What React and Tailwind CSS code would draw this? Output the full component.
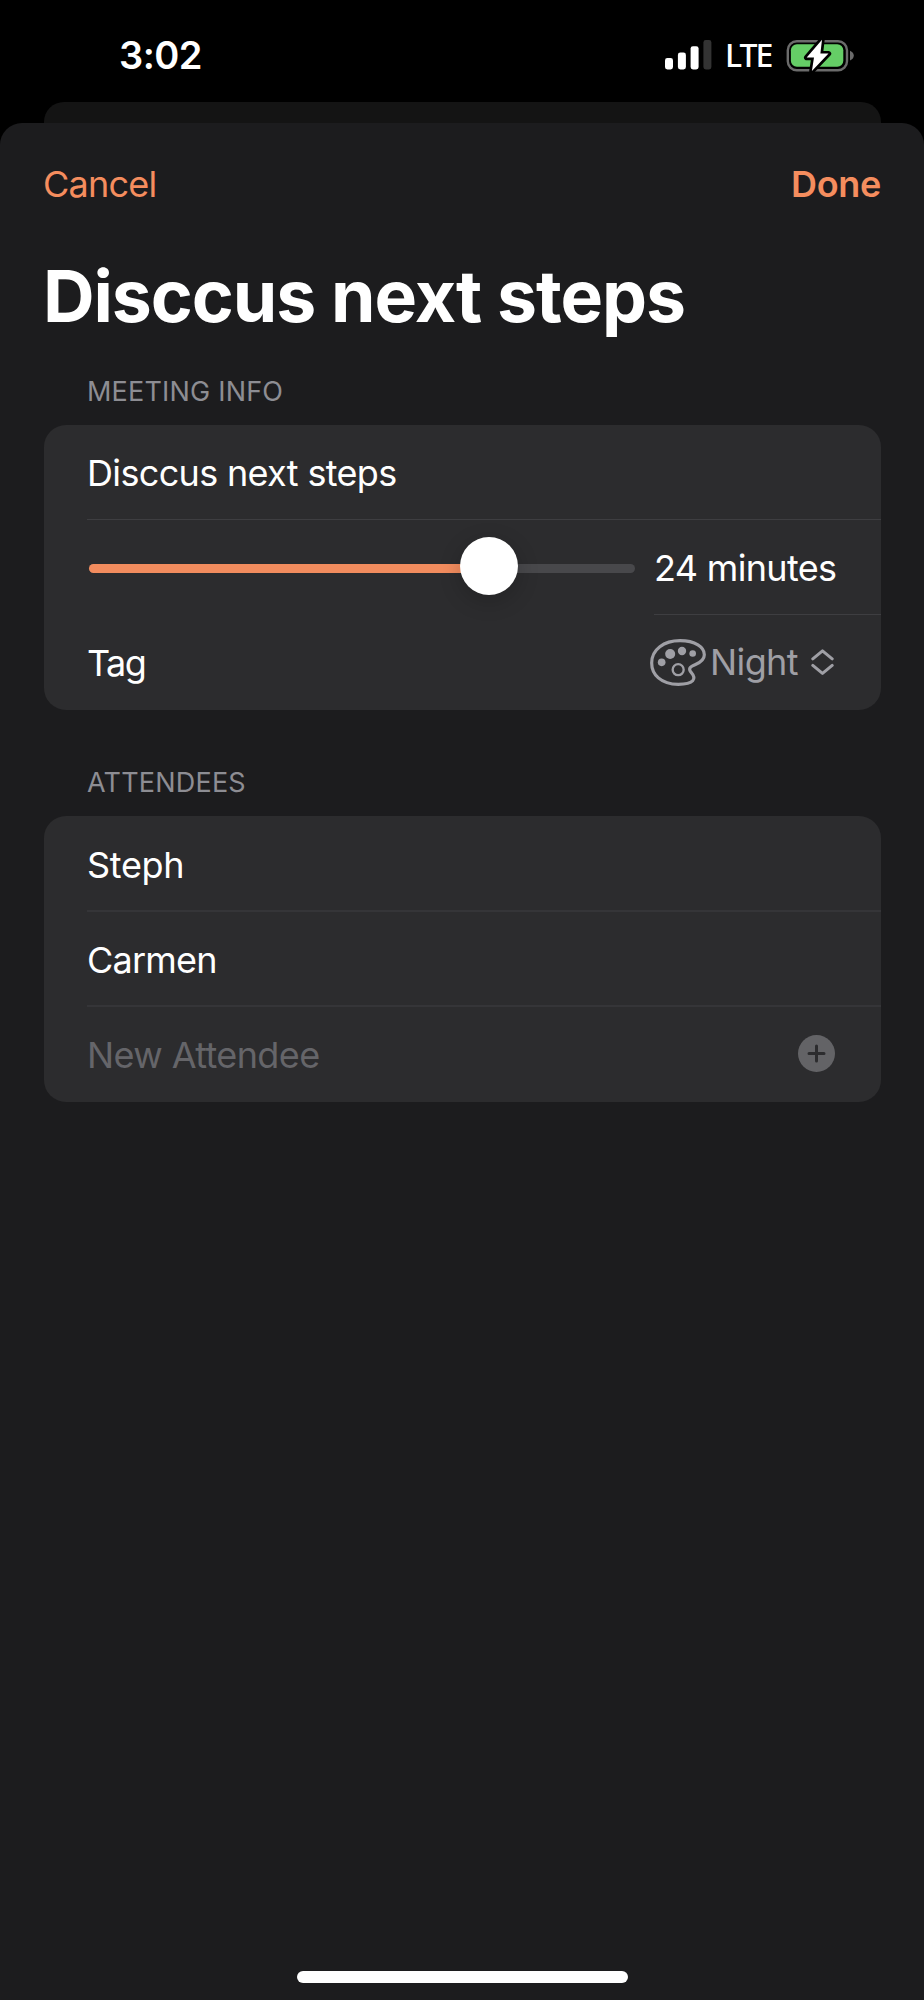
import React, { useState } from 'react';

const attendees = [
  { name: 'Steph', className: 'tracking-[-0.3px]' },
  { name: 'Carmen', className: 'tracking-[-0.8px]' },
];

const SignalIcon = () => (
  <svg className="h-[30px] w-[47px]" viewBox="0 0 47 30" fill="white">
    <rect x="0" y="18" width="8" height="11.5" rx="2.4" />
    <rect x="12.9" y="12.5" width="8" height="17" rx="2.4" />
    <rect x="25.6" y="6.2" width="8" height="23.3" rx="2.4" />
    <rect x="38.4" y="0" width="8" height="29.5" rx="2.4" fill="#333333" />
  </svg>
);

const BatteryIcon = () => (
  <svg className="h-[34px] w-[68px]" viewBox="0 0 68 34">
    <rect x="1.8" y="3.2" width="59.2" height="29" rx="9" fill="none" stroke="#6b6b6b" strokeWidth="2.4" />
    <path d="M64 12.7c2.5 1 3.8 2.8 3.8 4.9s-1.3 4-3.8 4.9z" fill="#6b6b6b" />
    <rect x="4.9" y="6.3" width="52.4" height="22.4" rx="6" fill="#65ce66" />
    <path
      d="M36 1.7 20.7 19.6H28L25.9 33 42.5 15.6H34.4z"
      fill="white"
      stroke="black"
      strokeWidth="5.4"
      strokeLinejoin="round"
      paintOrder="stroke"
    />
  </svg>
);

const PaletteIcon = () => (
  <svg className="h-[47px] w-[56px] shrink-0" viewBox="30 42 168 141" fill="none" stroke="#9f9fa5">
    <path
      d="M115 178C62 178 35 148 35 114 35 73 72 47 120 47c46 0 73 20 73 42 0 17-13 24-28 30-16 6-21 13-11 24 16 18 8 35-39 35z"
      strokeWidth="9.5"
    />
    <circle cx="114.5" cy="134" r="16.5" strokeWidth="7" />
    <g fill="#9f9fa5" stroke="none">
      <circle cx="65" cy="112" r="11.5" />
      <circle cx="90.5" cy="87" r="15" />
      <circle cx="126" cy="78" r="12.5" />
      <circle cx="158" cy="85.5" r="10" />
    </g>
  </svg>
);

const ChevronsIcon = () => (
  <svg
    className="mb-[1px] h-[26px] w-[23px] shrink-0"
    viewBox="0 0 23 26"
    fill="none"
    stroke="#9f9fa5"
    strokeWidth="3"
    strokeLinecap="round"
    strokeLinejoin="round"
  >
    <path d="M1.8 9.8 11.5 1.8 21.2 9.8M1.8 16.4 11.5 24.4 21.2 16.4" />
  </svg>
);

const SectionTitle = ({ className, children }) => (
  <h2
    className={`flex items-end pb-[19px] pl-[87px] text-[27px] leading-[28px] tracking-[0.2px] text-[#8d8d93] ${className}`}
  >
    {children}
  </h2>
);

export default function App() {
  const [duration] = useState(24);

  return (
    <div className="flex h-[2000px] w-[924px] flex-col overflow-hidden bg-black font-['Inter','Liberation_Sans',sans-serif] text-[36px] text-white">
      {/* Status bar */}
      <div className="flex h-[102px] shrink-0 items-center pt-[9px] pr-[70px] pl-[119px]">
        <span className="text-[38px] font-semibold tracking-[-0.5px]">3:02</span>
        <div className="ml-auto flex items-center pb-[2px]">
          <SignalIcon />
          <span className="ml-[13px] w-[61px] font-['Noto_Sans',sans-serif] text-[32px] leading-[34px] font-medium tracking-[-2px]">
            LTE
          </span>
          <BatteryIcon />
        </div>
      </div>

      {/* Edge of the screen underneath */}
      <div className="mr-[43px] ml-[44px] h-[21px] shrink-0 rounded-t-[20px] bg-[#141414]" />

      {/* Sheet */}
      <div className="flex flex-1 flex-col rounded-t-[22px] bg-[#1c1c1e]">
        <div className="flex h-[123px] items-center justify-between pr-[43px] pb-[2px] pl-[43px] text-[#f58d5e]">
          <button className="tracking-[-0.75px]">Cancel</button>
          <button className="font-semibold tracking-[-0.3px]">Done</button>
        </div>

        <h1 className="flex h-[100px] items-center pt-[1px] pl-[43px] text-[71.5px] font-bold tracking-[-1.07px]">
          Disccus next steps
        </h1>

        <SectionTitle className="h-[79px]">MEETING INFO</SectionTitle>
        <div className="mr-[43px] ml-[44px] rounded-[22px] bg-[#2c2c2e] pl-[43px]">
          <div className="flex h-[95px] items-center border-b border-[#3e3e41] pt-[2px] tracking-[-0.66px]">
            Disccus next steps
          </div>
          <div className="flex h-[95px]">
            <div className="mt-[2px] ml-[2px] flex w-[546px] items-center">
              <div className="relative h-[9px] w-full rounded-full bg-[#48484b]">
                <div className="h-full w-[400px] rounded-full bg-[#f28c5e]" />
                <div className="absolute -top-[27px] left-[371px] size-[58px] rounded-full bg-white shadow-[0_6px_22px_rgba(0,0,0,0.2)]" />
              </div>
            </div>
            <div className="ml-[19px] flex flex-1 items-center border-b border-[#3e3e41] pt-[2px] tracking-[-0.67px]">
              {duration} minutes
            </div>
          </div>
          <div className="flex h-[95px] items-center pr-[47px]">
            <span className="tracking-[-1.5px]">Tag</span>
            <div className="ml-auto flex items-center text-[#9f9fa5]">
              <PaletteIcon />
              <span className="ml-[4px] w-[101px] pb-[1px] tracking-[-0.6px]">Night</span>
              <ChevronsIcon />
            </div>
          </div>
        </div>

        <SectionTitle className="h-[106px]">ATTENDEES</SectionTitle>
        <div className="mr-[43px] ml-[44px] rounded-[22px] bg-[#2c2c2e] pt-[1px] pl-[43px]">
          {attendees.map((attendee) => (
            <div
              key={attendee.name}
              className={`flex h-[95px] items-center border-b-2 border-[#353538] pt-[2px] ${attendee.className}`}
            >
              {attendee.name}
            </div>
          ))}
          <div className="flex h-[95px] items-center justify-between pr-[46px]">
            <span className="tracking-[-0.6px] text-[#656569]">New Attendee</span>
            <svg className="mb-[3px] size-[37px]" viewBox="0 0 37 37">
              <circle cx="18.5" cy="18.5" r="18.5" fill="#636366" />
              <path d="M18.5 11v15M11 18.5h15" stroke="#2c2c2e" strokeWidth="3" strokeLinecap="round" />
            </svg>
          </div>
        </div>

        {/* Home indicator */}
        <div className="mx-auto mt-auto mb-[17px] h-[12px] w-[331px] rounded-full bg-white" />
      </div>
    </div>
  );
}
